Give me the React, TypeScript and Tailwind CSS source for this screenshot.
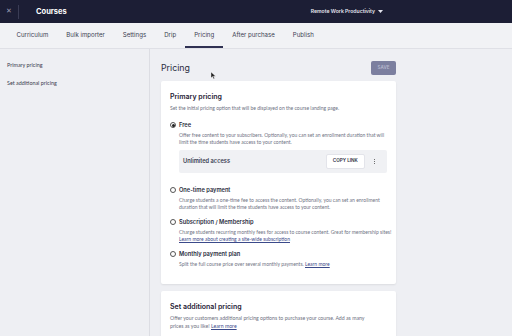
import React from "react";

const inter = { fontFamily: "Inter, 'Noto Sans', sans-serif" };
const lato = { fontFamily: "Lato, 'Open Sans', sans-serif" };

const tabs = ["Curriculum", "Bulk importer", "Settings", "Drip", "Pricing", "After purchase", "Publish"];

function Radio({ checked }: { checked?: boolean }) {
  return (
    <span className="w-[6px] h-[6px] rounded-full border-[0.8px] border-[#555] flex items-center justify-center shrink-0 bg-white">
      {checked && <span className="w-[3px] h-[3px] rounded-full bg-[#222]" />}
    </span>
  );
}

function Option({
  label,
  checked,
  children,
}: {
  label: string;
  checked?: boolean;
  children: React.ReactNode;
}) {
  return (
    <div className="flex flex-col">
      <div className="flex items-center gap-[3px] h-[9px]">
        <Radio checked={checked} />
        <span style={inter} className="text-[5.7px] font-semibold text-[#2a2c40]">
          {label}
        </span>
      </div>
      <div style={lato} className="pl-[9px] mt-[2px] text-[5px] leading-[7px] text-[#707384] whitespace-nowrap">
        {children}
      </div>
    </div>
  );
}

export default function App() {
  return (
    <div className="relative w-[512px] h-[336px] overflow-hidden bg-[#eeeff3] flex flex-col">
      {/* Top bar */}
      <div className="h-[23px] bg-[#1c1e35] flex items-center shrink-0">
        <span className="w-[18px] text-center text-[7px] text-[#9a9cb3]" style={inter}>
          ✕
        </span>
        <span className="w-px h-[14px] bg-[#3a3c55]" />
        <span style={inter} className="ml-[17px] text-[7.5px] font-bold text-white">
          Courses
        </span>
        <span
          style={inter}
          className="ml-auto mr-[129px] text-[5.1px] font-semibold text-[#e4e5ee] flex items-center gap-[3px]"
        >
          Remote Work Productivity
          <svg width="5" height="3" viewBox="0 0 5 3">
            <path d="M0 0h5L2.5 3z" fill="#e4e5ee" />
          </svg>
        </span>
      </div>

      {/* Tabs */}
      <div className="h-[26px] bg-[#f1f2f5] border-b border-[#dfe0e6] flex items-stretch pl-[7.5px] shrink-0">
        {tabs.map((t) => (
          <div
            key={t}
            style={inter}
            className={`px-[9px] flex items-center text-[6.1px] text-[#3c3e52] border-b-2 ${
              t === "Pricing" ? "border-[#2f3152] text-[#1c1e35]" : "border-transparent"
            }`}
          >
            {t}
          </div>
        ))}
      </div>

      <div className="flex flex-1 min-h-0">
        {/* Sidebar */}
        <div className="w-[150px] border-r border-[#dcdde3] pt-[13px] pl-[7px] flex flex-col gap-[11px] shrink-0">
          <span style={lato} className="text-[5.4px] text-[#3a3c4e] leading-[7px]">
            Primary pricing
          </span>
          <span style={lato} className="text-[5.4px] text-[#3a3c4e] leading-[7px]">
            Set additional pricing
          </span>
        </div>

        {/* Main */}
        <div className="pl-[11px] pt-[12px] w-[246px] flex flex-col">
          <div className="flex items-center justify-between h-[14px]">
            <span style={inter} className="text-[8.8px] text-[#2a2c40]">
              Pricing
            </span>
            <span
              style={inter}
              className="w-[25px] h-[14px] rounded-[2px] bg-[#7c7f9f] text-[#b7b9cf] text-[4.5px] font-semibold flex items-center justify-center"
            >
              SAVE
            </span>
          </div>

          <div className="mt-[6px] w-[235px] bg-white rounded-[2px] shadow-[0_1px_2px_rgba(0,0,0,0.08)] px-[9px] pt-[10px] pb-[16.5px] flex flex-col">
            <span style={inter} className="text-[7px] font-semibold text-[#1f2135] leading-[11px]">
              Primary pricing
            </span>
            <span style={lato} className="mt-[2.5px] text-[5px] leading-[7px] text-[#6c6f80]">
              Set the initial pricing option that will be displayed on the course landing page.
            </span>

            <div className="mt-[9px] flex flex-col gap-[7px]">
              <div className="flex flex-col mb-[5.5px]">
                <Option label="Free" checked>
                  Offer free content to your subscribers. Optionally, you can set an enrollment duration that will
                  <br />
                  limit the time students have access to your content.
                </Option>
                <div className="ml-[9px] mt-[4.5px] h-[23px] bg-[#f0f1f4] rounded-[2px] flex items-center pl-[4px] pr-[12px]">
                  <span style={inter} className="text-[5.7px] font-semibold text-[#3a3c50]">
                    Unlimited access
                  </span>
                  <span
                    style={inter}
                    className="ml-auto w-[39px] h-[15px] bg-white rounded-[2px] border border-[#e3e4ea] text-[4.6px] font-semibold text-[#2a2c40] flex items-center justify-center"
                  >
                    COPY LINK
                  </span>
                  <span className="ml-[9px] flex flex-col gap-[0.8px]">
                    <span className="w-[1.2px] h-[1.2px] rounded-full bg-[#444]" />
                    <span className="w-[1.2px] h-[1.2px] rounded-full bg-[#444]" />
                    <span className="w-[1.2px] h-[1.2px] rounded-full bg-[#444]" />
                  </span>
                </div>
              </div>

              <Option label="One-time payment">
                Charge students a one-time fee to access the content. Optionally, you can set an enrollment
                <br />
                duration that will limit the time students have access to your content.
              </Option>

              <Option label="Subscription / Membership">
                Charge students recurring monthly fees for access to course content. Great for membership sites!
                <br />
                <span className="underline text-[#3b4a8a]">Learn more about creating a site-wide subscription</span>
              </Option>

              <Option label="Monthly payment plan">
                Split the full course price over several monthly payments.{" "}
                <span className="underline text-[#3b4a8a]">Learn more</span>
              </Option>
            </div>
          </div>

          <div className="mt-[7px] w-[235px] bg-white rounded-[2px] shadow-[0_1px_2px_rgba(0,0,0,0.08)] px-[9px] pt-[9.5px] pb-[12px] flex flex-col">
            <span style={inter} className="text-[7px] font-semibold text-[#1f2135] leading-[11px]">
              Set additional pricing
            </span>
            <span style={lato} className="mt-[2.5px] text-[5.2px] leading-[8px] text-[#6c6f80] whitespace-nowrap">
              Offer your customers additional pricing options to purchase your course. Add as many
              <br />
              prices as you like! <span className="underline text-[#3b4a8a]">Learn more</span>
            </span>
          </div>
        </div>
      </div>

      {/* mouse cursor */}
      <svg className="absolute left-[211px] top-[72px]" width="5" height="7" viewBox="0 0 5 7">
        <path d="M0 0v6l1.5-1.5L2.6 7l1-.4-1.1-2.4H4.6z" fill="#222" stroke="#fff" strokeWidth="0.4" />
      </svg>
    </div>
  );
}
